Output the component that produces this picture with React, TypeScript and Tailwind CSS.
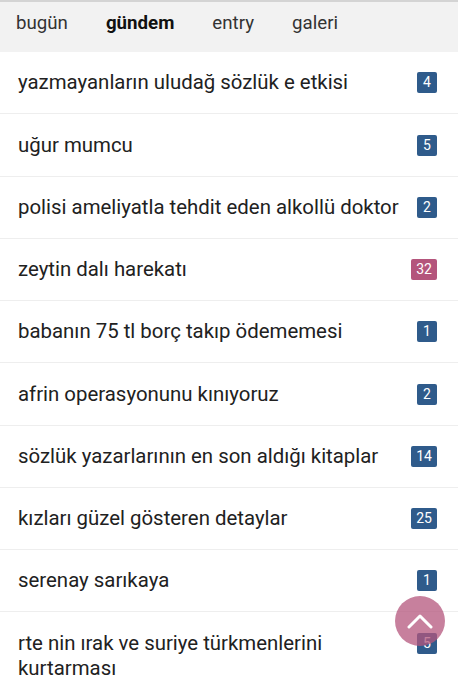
import React from 'react';

interface Topic {
  title: string;
  count: number;
  hot?: boolean;
}

const topics: Topic[] = [
  { title: 'yazmayanların uludağ sözlük e etkisi', count: 4 },
  { title: 'uğur mumcu', count: 5 },
  { title: 'polisi ameliyatla tehdit eden alkollü doktor', count: 2 },
  { title: 'zeytin dalı harekatı', count: 32, hot: true },
  { title: 'babanın 75 tl borç takıp ödememesi', count: 1 },
  { title: 'afrin operasyonunu kınıyoruz', count: 2 },
  { title: 'sözlük yazarlarının en son aldığı kitaplar', count: 14 },
  { title: 'kızları güzel gösteren detaylar', count: 25 },
  { title: 'serenay sarıkaya', count: 1 },
  { title: 'rte nin ırak ve suriye türkmenlerini kurtarması', count: 5 },
];

const tabs = ['bugün', 'gündem', 'entry', 'galeri'];

export default function App() {
  return (
    <div className="relative h-[690px] w-[458px] overflow-hidden bg-white font-['Roboto',sans-serif]">
      {/* Tabs */}
      <div className="flex h-[52px] items-start gap-[38px] border-t-2 border-[#d4d4d4] bg-[#f2f2f2] pl-4 pt-[10px] text-[18.7px] leading-[22px] text-[#333]">
        {tabs.map((t) => (
          <span key={t} className={t === 'gündem' ? 'font-bold text-[#111]' : ''}>
            {t}
          </span>
        ))}
      </div>

      {/* Topics */}
      <ul>
        {topics.map((t) => (
          <li
            key={t.title}
            className="flex items-start justify-between border-b border-[#eeeeee] pl-[18px] pr-[21px] pt-[18.25px] pb-[18px]"
          >
            <span className="pr-2 text-[20.4px] leading-[25px] text-[#212121]">{t.title}</span>
            <span
              className={`mt-[2px] flex h-[21px] min-w-[20px] shrink-0 items-center justify-center rounded-[2px] px-[5px] text-[14px] text-white ${
                t.hot ? 'bg-[#b4557c]' : 'bg-[#2f5b8b]'
              }`}
            >
              {t.count}
            </span>
          </li>
        ))}
      </ul>

      {/* Scroll to top */}
      <button className="absolute left-[395px] top-[596px] flex h-[50px] w-[50px] items-center justify-center rounded-full bg-[#b4557c]/75">
        <svg width="26" height="16" viewBox="0 0 26 16" fill="none">
          <path d="M2 14 L13 3 L24 14" stroke="white" strokeWidth="3" strokeLinecap="round" strokeLinejoin="round" />
        </svg>
      </button>
    </div>
  );
}
